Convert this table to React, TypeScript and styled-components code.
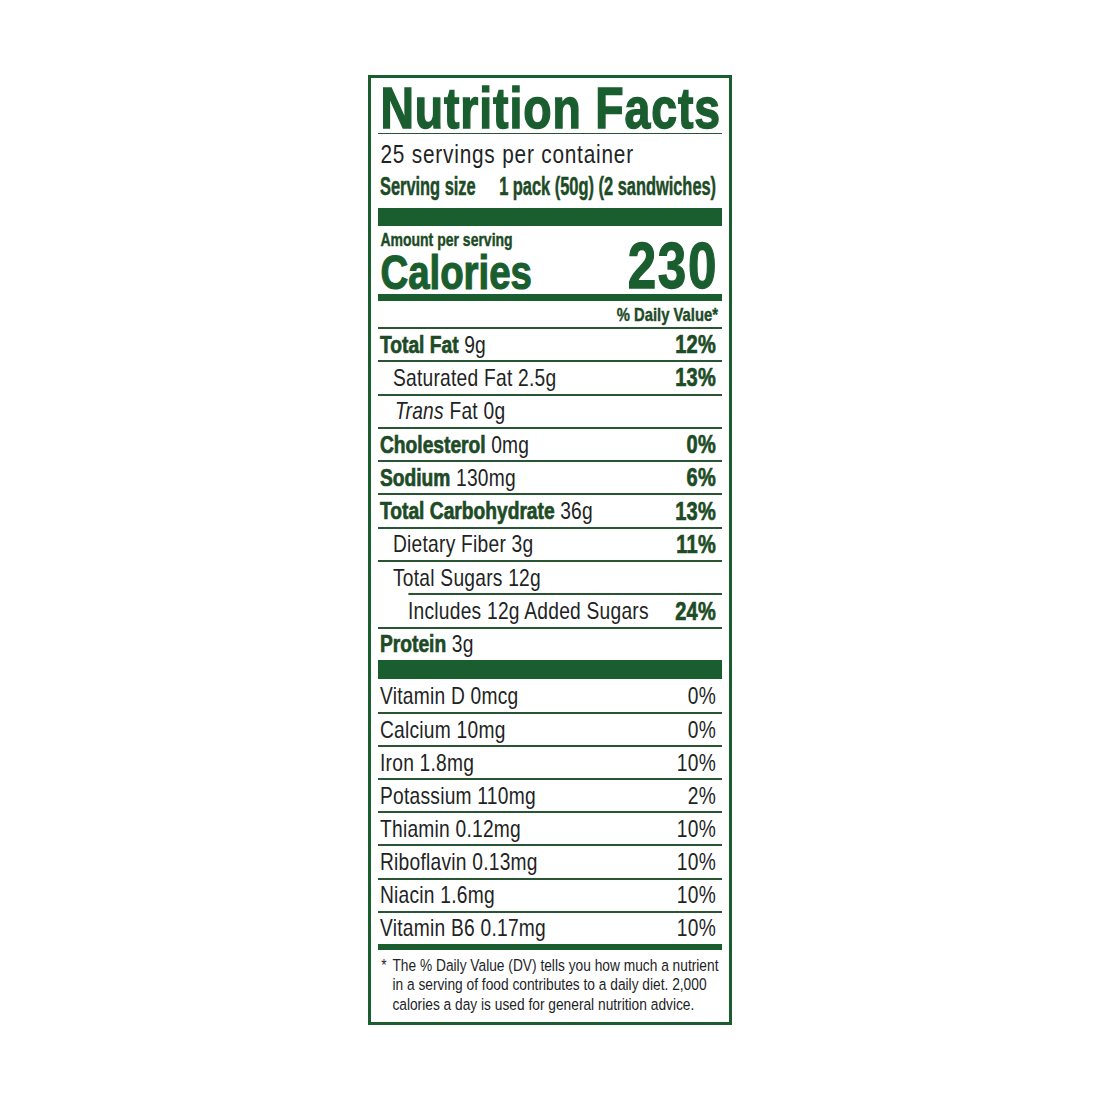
import React from "react";
import styled, { createGlobalStyle } from "styled-components";

const GREEN = "#1a5e2f";
const DARK = "#1d4b26";
const INK = "#1e241f";
const RULE = "#2a5532";
const FONT = `"Liberation Sans", Arial, sans-serif`;

// the label's type is a narrow grotesque: the whole column is set in
// Liberation Sans and squeezed horizontally to match its width
const SQUEEZE = 0.8;

const GlobalStyle = createGlobalStyle`
    body {
        margin: 0;
        background: #ffffff;
        font-family: ${FONT};
    }
`;

const Page = styled.div`
    display: flex;
    justify-content: center;
    width: 1100px;
    height: 1100px;
    padding-top: 75px;
    box-sizing: border-box;
`;

const Label = styled.div`
    width: 364px;
    height: 950px;
    box-sizing: border-box;
    border: 3px solid ${GREEN};
    padding: 0 7px;
    color: ${INK};
    font-family: ${FONT};
`;

const Column = styled.div`
    width: ${344 / SQUEEZE}px;
    transform: scaleX(${SQUEEZE});
    transform-origin: 0 0;
`;

const Title = styled.h1`
    margin: 0;
    padding: 4px 0 0 3px;
    font-size: 58px;
    line-height: 51px;
    font-weight: 700;
    letter-spacing: 1.1px;
    color: ${GREEN};
    -webkit-text-stroke: 1.5px ${GREEN};
    border-bottom: 1px solid ${RULE};
    white-space: nowrap;
`;

const Servings = styled.div`
    margin-top: 5px;
    padding-left: 3px;
    font-size: 26px;
    line-height: 30px;
    letter-spacing: 1px;
`;

const ServingSize = styled.div`
    display: flex;
    justify-content: space-between;
    width: ${100 / 0.82}%;
    margin-top: 2px;
    padding: 0 9px 0 3px;
    box-sizing: border-box;
    font-size: 25px;
    line-height: 30px;
    font-weight: 700;
    color: ${DARK};
    -webkit-text-stroke: 0.5px ${DARK};
    transform: scaleX(0.82);
    transform-origin: left center;
    white-space: nowrap;
`;

const Bar = styled.div<{ $h: number; $top?: number }>`
    height: ${(p) => p.$h}px;
    margin-top: ${(p) => p.$top ?? 0}px;
    background: ${GREEN};
`;

const CalorieBlock = styled.div`
    display: flex;
    justify-content: space-between;
    align-items: flex-end;
    margin-bottom: -2px;
    padding: 0 5px 0 3px;
`;

const CalorieLeft = styled.div`
    display: flex;
    flex-direction: column;
`;

const Amount = styled.div`
    padding-top: 5px;
    font-size: 17.5px;
    line-height: 18px;
    font-weight: 700;
    color: ${DARK};
    -webkit-text-stroke: 0.4px ${DARK};
`;

const Calories = styled.div`
    font-size: 48px;
    line-height: 47px;
    font-weight: 700;
    color: ${GREEN};
    -webkit-text-stroke: 1.2px ${GREEN};
`;

const CalorieCount = styled.div`
    font-size: 64px;
    line-height: 59px;
    font-weight: 700;
    letter-spacing: 2px;
    color: ${GREEN};
    -webkit-text-stroke: 1.3px ${GREEN};
`;

const DvHeader = styled.div`
    display: flex;
    justify-content: flex-end;
    align-items: center;
    height: 26px;
    padding: 2px 5px 0 0;
    box-sizing: border-box;
    font-size: 18.5px;
    font-weight: 700;
    color: ${DARK};
    -webkit-text-stroke: 0.4px ${DARK};
`;

const Row = styled.div<{ $indent?: number; $ruleIndent?: number; $noRule?: boolean; $h?: number }>`
    display: flex;
    justify-content: space-between;
    align-items: center;
    height: ${(p) => p.$h ?? 33.3}px;
    box-sizing: border-box;
    margin-left: ${(p) => (p.$ruleIndent ?? 0) / SQUEEZE}px;
    padding-right: ${6 / SQUEEZE}px;
    padding-left: ${(p) => ((p.$indent ?? 2) - (p.$ruleIndent ?? 0)) / SQUEEZE}px;
    border-top: ${(p) => (p.$noRule ? "none" : `2px solid ${RULE}`)};
    font-size: 24px;
    letter-spacing: 0.3px;
    white-space: nowrap;
`;

const Bold = styled.b`
    font-weight: 700;
    font-size: 24px;
    letter-spacing: 0;
    color: ${DARK};
    -webkit-text-stroke: 0.7px ${DARK};
`;

const Pct = styled.span<{ $bold?: boolean }>`
    font-weight: ${(p) => (p.$bold ? 700 : 400)};
    font-size: ${(p) => (p.$bold ? 25 : 24)}px;
    color: ${(p) => (p.$bold ? DARK : INK)};
    -webkit-text-stroke: ${(p) => (p.$bold ? `0.7px ${DARK}` : "0")};
`;

const Footnote = styled.p`
    display: flex;
    margin: 0;
    padding: 6px 0 0 4px;
    font-size: 17.2px;
    line-height: 19.5px;
    white-space: nowrap;
`;

const Star = styled.span`
    width: 14px;
    flex: none;
`;

type Nutrient = {
    name?: string;
    rest: React.ReactNode;
    pct?: string;
    indent?: number;
    ruleIndent?: number;
};

const nutrients: Nutrient[] = [
    { name: "Total Fat", rest: "9g", pct: "12%" },
    { rest: "Saturated Fat 2.5g", pct: "13%", indent: 15 },
    { rest: <><i>Trans</i> Fat 0g</>, indent: 17 },
    { name: "Cholesterol", rest: "0mg", pct: "0%" },
    { name: "Sodium", rest: "130mg", pct: "6%" },
    { name: "Total Carbohydrate", rest: "36g", pct: "13%" },
    { rest: "Dietary Fiber 3g", pct: "11%", indent: 15 },
    { rest: "Total Sugars 12g", indent: 15 },
    { rest: "Includes 12g Added Sugars", pct: "24%", indent: 30, ruleIndent: 30 },
    { name: "Protein", rest: "3g" },
];

const vitamins: [string, string][] = [
    ["Vitamin D 0mcg", "0%"],
    ["Calcium 10mg", "0%"],
    ["Iron 1.8mg", "10%"],
    ["Potassium 110mg", "2%"],
    ["Thiamin 0.12mg", "10%"],
    ["Riboflavin 0.13mg", "10%"],
    ["Niacin 1.6mg", "10%"],
    ["Vitamin B6 0.17mg", "10%"],
];

const App: React.FC = () => {
    return (
        <Page>
            <GlobalStyle />
            <Label>
                <Column>
                    <Title>Nutrition Facts</Title>
                    <Servings>25 servings per container</Servings>
                    <ServingSize>
                        <span>Serving size</span>
                        <span>1 pack (50g) (2 sandwiches)</span>
                    </ServingSize>
                    <Bar $h={18} $top={7} />
                    <CalorieBlock>
                        <CalorieLeft>
                            <Amount>Amount per serving</Amount>
                            <Calories>Calories</Calories>
                        </CalorieLeft>
                        <CalorieCount>230</CalorieCount>
                    </CalorieBlock>
                    <Bar $h={7} />
                    <DvHeader>% Daily Value*</DvHeader>
                    {nutrients.map((n, i) => (
                        <Row key={i} $indent={n.indent} $ruleIndent={n.ruleIndent}>
                            <span>
                                {n.name && <Bold>{n.name}</Bold>}
                                {n.name ? " " : ""}
                                {n.rest}
                            </span>
                            {n.pct && <Pct $bold>{n.pct}</Pct>}
                        </Row>
                    ))}
                    <Bar $h={19} />
                    {vitamins.map(([name, pct], i) => (
                        <Row key={name} $noRule={i === 0} $h={33.1}>
                            <span>{name}</span>
                            <Pct>{pct}</Pct>
                        </Row>
                    ))}
                    <Bar $h={6} />
                    <Footnote>
                        <Star>*</Star>
                        <span>
                            The % Daily Value (DV) tells you how much a nutrient
                            <br />
                            in a serving of food contributes to a daily diet. 2,000
                            <br />
                            calories a day is used for general nutrition advice.
                        </span>
                    </Footnote>
                </Column>
            </Label>
        </Page>
    );
};

export default App;
